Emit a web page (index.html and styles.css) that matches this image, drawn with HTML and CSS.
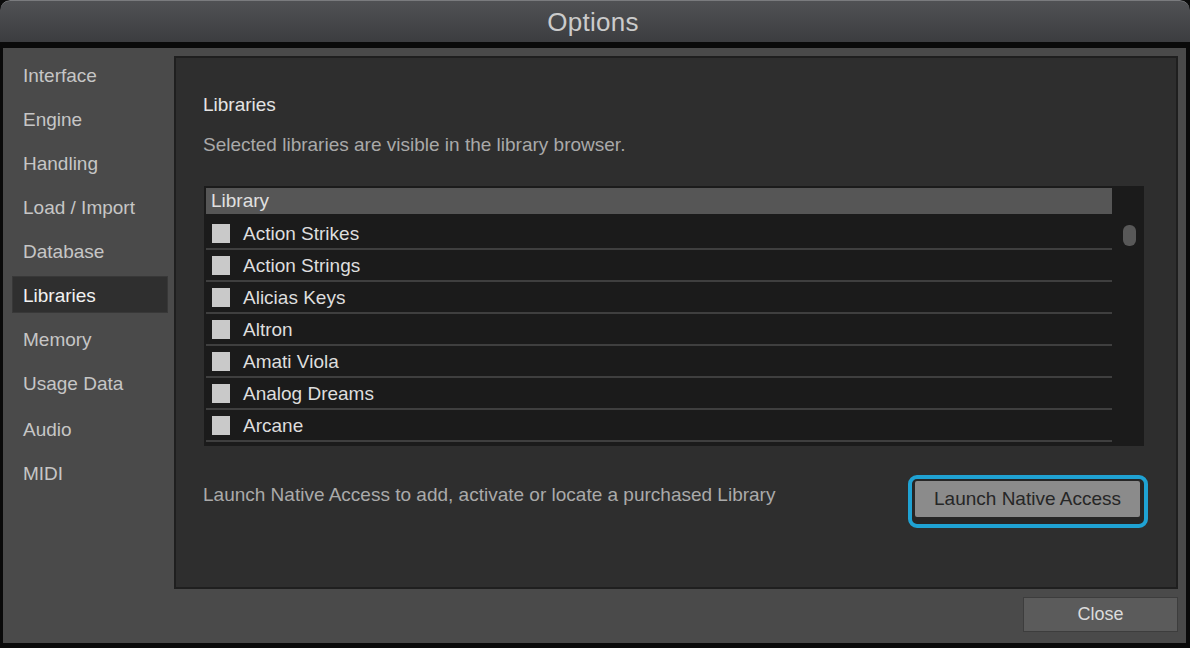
FILE: index.html
```html
<!DOCTYPE html>
<html>
<head>
<meta charset="utf-8">
<title>Options</title>
<link rel="stylesheet" href="styles.css">
</head>
<body>
<div class="window">
  <header class="titlebar">Options</header>
  <div class="body">
    <div class="main">
      <nav class="sidebar">
        <div class="nav-item">Interface</div>
        <div class="nav-item">Engine</div>
        <div class="nav-item">Handling</div>
        <div class="nav-item">Load / Import</div>
        <div class="nav-item">Database</div>
        <div class="nav-item active">Libraries</div>
        <div class="nav-item">Memory</div>
        <div class="nav-item">Usage Data</div>
        <div class="nav-item audio">Audio</div>
        <div class="nav-item">MIDI</div>
      </nav>
      <section class="panel">
        <h1 class="panel-title">Libraries</h1>
        <p class="panel-desc">Selected libraries are visible in the library browser.</p>
        <div class="table">
          <div class="list">
            <div class="list-header">Library</div>
            <div class="row"><span class="check"></span><span class="row-label">Action Strikes</span></div>
            <div class="row"><span class="check"></span><span class="row-label">Action Strings</span></div>
            <div class="row"><span class="check"></span><span class="row-label">Alicias Keys</span></div>
            <div class="row"><span class="check"></span><span class="row-label">Altron</span></div>
            <div class="row"><span class="check"></span><span class="row-label">Amati Viola</span></div>
            <div class="row"><span class="check"></span><span class="row-label">Analog Dreams</span></div>
            <div class="row"><span class="check"></span><span class="row-label">Arcane</span></div>
          </div>
          <div class="scroll"><div class="thumb"></div></div>
        </div>
        <div class="launch-row">
          <span class="launch-text">Launch Native Access to add, activate or locate a purchased Library</span>
          <div class="focus-ring"><button class="launch-btn">Launch Native Access</button></div>
        </div>
      </section>
    </div>
    <div class="footer">
      <button class="close-btn">Close</button>
    </div>
  </div>
</div>
</body>
</html>
```

FILE: styles.css
```css
* { box-sizing: border-box; }

html, body {
  margin: 0;
  padding: 0;
  background: #0b0b0b;
}

body {
  width: 1190px;
  height: 648px;
  overflow: hidden;
  font-family: "Liberation Sans", Arial, sans-serif;
}

.window {
  width: 1190px;
  height: 648px;
  background: #0a0a0a;
  border-radius: 10px 10px 0 0;
  display: flex;
  flex-direction: column;
  overflow: hidden;
}

.titlebar {
  height: 42px;
  flex: none;
  background: linear-gradient(#505154, #3c3d40);
  border-top: 1px solid #7a7b7e;
  border-radius: 10px 10px 0 0;
  color: #cbcbcb;
  font-size: 26px;
  line-height: 42px;
  text-align: center;
  padding-right: 4px;
  letter-spacing: 0.3px;
}

.body {
  flex: 1;
  margin: 6px 4px 5px 3px;
  background: #4a4a4a;
  display: flex;
  flex-direction: column;
  padding: 8px 8px 0 9px;
}

.main {
  display: flex;
  gap: 6px;
  height: 533px;
}

.sidebar {
  width: 156px;
  display: flex;
  flex-direction: column;
  gap: 7px;
}

.nav-item {
  height: 37px;
  line-height: 37px;
  padding-left: 10px;
  font-size: 19px;
  color: #c6c6c6;
  border: 1px solid transparent;
}

.nav-item.audio { margin-top: 2px; }

.nav-item.active {
  background: #2f2f2f;
  border-color: #383838;
  color: #f2f2f2;
}

.panel {
  width: 1004px;
  background: #2e2e2e;
  border: 2px solid #1f1f1f;
  padding: 0 32px 0 27px;
  display: flex;
  flex-direction: column;
}

.panel-title {
  margin: 35px 0 0 0;
  font-size: 19px;
  font-weight: normal;
  line-height: 24px;
  color: #e4e4e4;
}

.panel-desc {
  margin: 16px 0 0 0;
  font-size: 19px;
  line-height: 24px;
  color: #a9a9a9;
}

.table {
  margin: 29px 0 0 1px;
  height: 260px;
  background: #1b1b1b;
  display: flex;
  padding: 2px 0 0 2px;
}

.list {
  width: 906px;
  display: flex;
  flex-direction: column;
}

.list-header {
  height: 26px;
  line-height: 26px;
  background: #565656;
  color: #e0e0e0;
  font-size: 19px;
  padding-left: 5px;
  margin-bottom: 4px;
}

.row {
  height: 32px;
  border-bottom: 2px solid #3f3f3f;
  display: flex;
  align-items: center;
  padding-left: 6px;
  padding-top: 1px;
  gap: 13px;
}

.check {
  width: 18px;
  height: 19px;
  background: #c9c9c9;
  flex: none;
}

.row-label {
  font-size: 19px;
  color: #dedede;
}

.scroll {
  flex: 1;
  position: relative;
}

.thumb {
  position: absolute;
  left: 11px;
  top: 37px;
  width: 13px;
  height: 21px;
  border-radius: 6px;
  background: #585858;
}

.launch-row {
  margin-top: 29px;
  display: flex;
  align-items: flex-start;
  justify-content: space-between;
}

.launch-text {
  margin: 8px 0 0 0;
  font-size: 19px;
  line-height: 24px;
  color: #aaaaaa;
}

.focus-ring {
  width: 240px;
  height: 53px;
  margin-right: -4px;
  border: 4px solid #1fa2d3;
  border-radius: 9px;
  background: #262626;
  padding: 2px 4px 7px 3px;
}

.launch-btn {
  display: block;
  width: 100%;
  height: 100%;
  background: #8b8b8b;
  border: none;
  border-radius: 2px;
  font-family: "Liberation Sans", Arial, sans-serif;
  font-size: 19px;
  color: #262626;
  padding: 0;
}

.footer {
  display: flex;
  justify-content: flex-end;
  padding-top: 8px;
}

.close-btn {
  width: 155px;
  height: 35px;
  background: #5b5b5b;
  border: 1px solid #3d3d3d;
  font-family: "Liberation Sans", Arial, sans-serif;
  font-size: 18px;
  color: #dcdcdc;
  padding: 0;
}
```
